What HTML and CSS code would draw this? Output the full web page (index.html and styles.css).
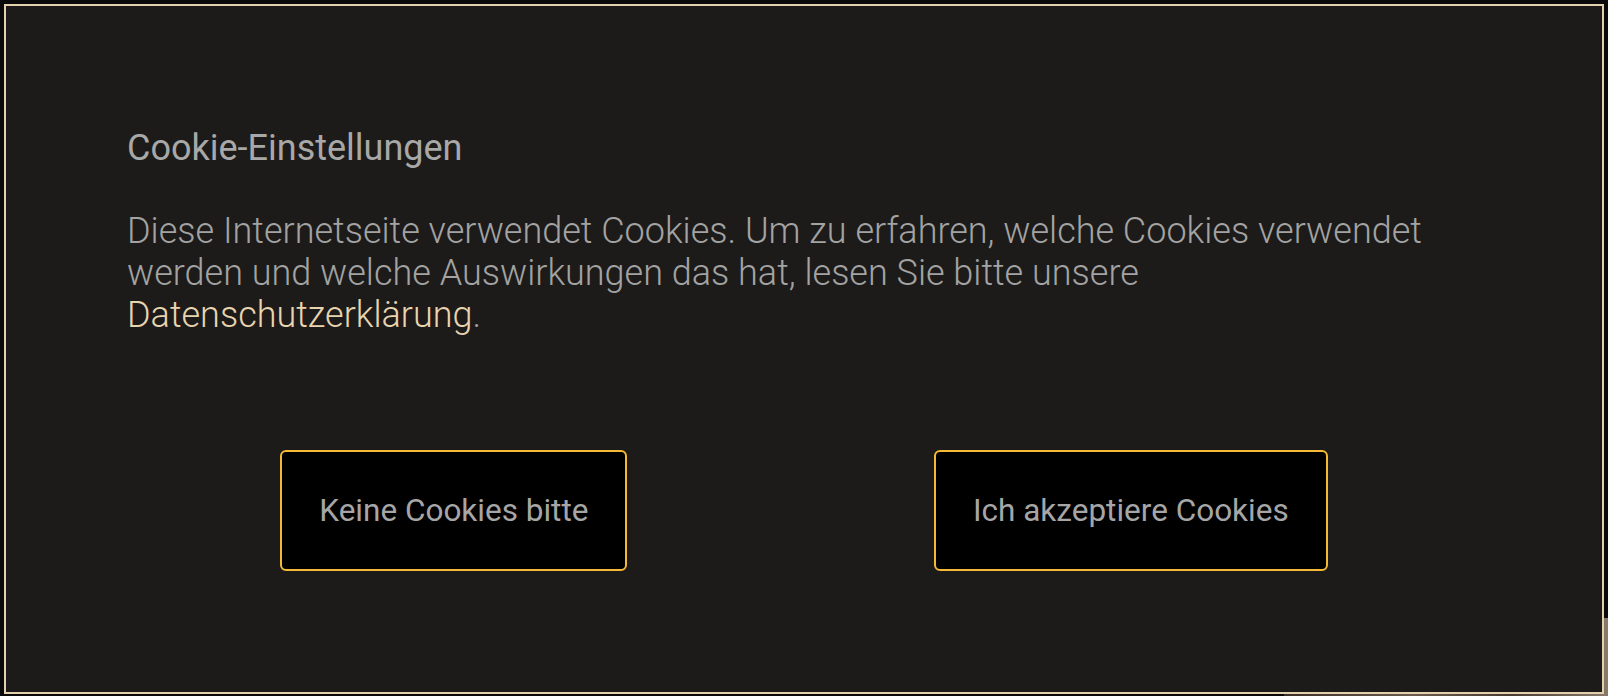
FILE: index.html
```html
<!DOCTYPE html>
<html lang="de">
<head>
    <meta charset="UTF-8">
    <meta name="viewport" content="width=device-width, initial-scale=1.0">
    <title>Cookie-Einstellungen</title>
    <link rel="stylesheet" href="styles.css">
</head>
<body>
    <div class="page-bg">
        <div class="page-photo"></div>
    </div>

    <div class="cookie-modal">
        <h2 class="cookie-title">Cookie-Einstellungen</h2>
        <p class="cookie-text">
            Diese Internetseite verwendet Cookies. Um zu erfahren, welche Cookies verwendet
            werden und welche Auswirkungen das hat, lesen Sie bitte unsere
            <a href="#" class="cookie-link">Datenschutzerklärung</a>.
        </p>
        <div class="cookie-actions">
            <button type="button" class="cookie-btn">Keine Cookies bitte</button>
            <button type="button" class="cookie-btn">Ich akzeptiere Cookies</button>
        </div>
    </div>
</body>
</html>
```

FILE: styles.css
```css
body {
    font-family: Roboto, "Liberation Sans", sans-serif;
    margin: 0;
    padding: 0;
    height: 100vh;
    background-color: #0a0a0a;
    overflow: hidden;
}

.page-bg {
    height: 100%;
    position: relative;
}

.page-photo {
    position: absolute;
    left: 1284px;
    top: 618px;
    right: 0;
    bottom: 0;
    background: linear-gradient(90deg, #3a2e26 0%, #6b5a4d 40%, #4a3a30 70%, #8a7a6c 100%);
}

.cookie-modal {
    position: fixed;
    top: 4px;
    left: 4px;
    width: 1600px;
    height: 690px;
    box-sizing: border-box;
    background-color: #1c1b19;
    border: 2px solid #e3d1ad;
    padding: 122px 121px 0 121px;
}

.cookie-title {
    margin: 0;
    font-size: 36px;
    line-height: 40px;
    font-weight: 400;
    color: #a8a8a8;
}

.cookie-text {
    margin: 42px 0 0 0;
    font-size: 36px;
    line-height: 42px;
    font-weight: 300;
    color: #a3a3a3;
}

.cookie-link {
    color: #e8d5b0;
    text-decoration: none;
}

.cookie-actions {
    margin-top: 114px;
    display: flex;
    justify-content: space-around;
}

.cookie-btn {
    font-family: Roboto, "Liberation Sans", sans-serif;
    font-size: 31.5px;
    line-height: 37px;
    font-weight: 400;
    color: #a6a6a6;
    background-color: #000;
    border: 2px solid #f4b935;
    border-radius: 6px;
    padding: 40px 37px;
    cursor: pointer;
}
```
